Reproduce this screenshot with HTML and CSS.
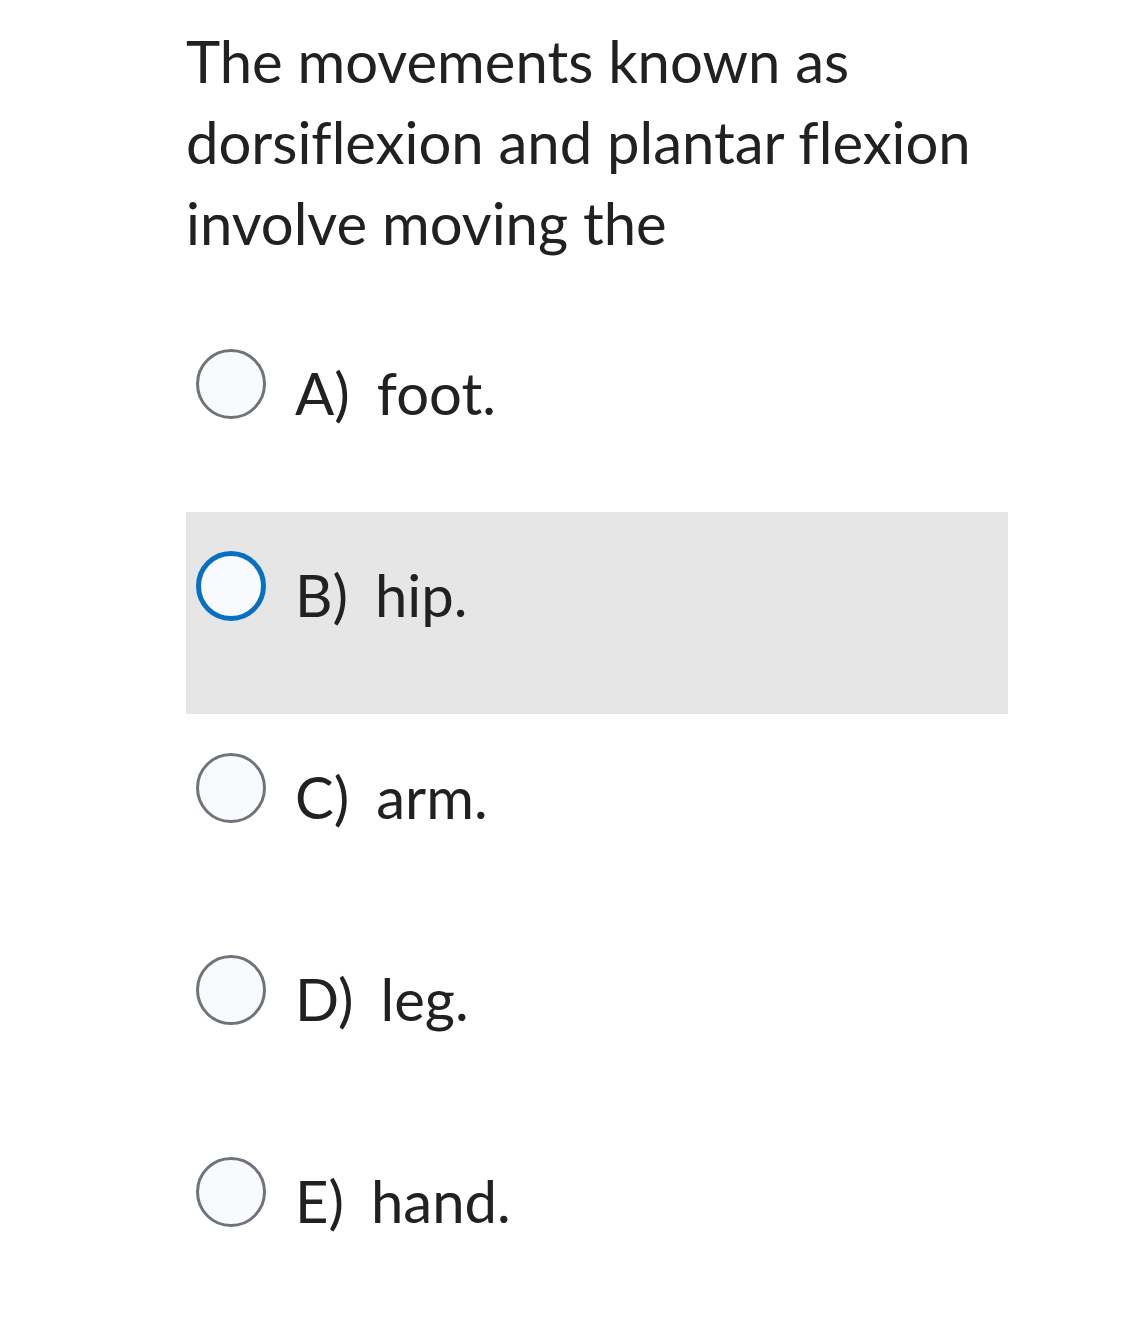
FILE: index.html
```html
<!DOCTYPE html>
<html>
<head>
<meta charset="utf-8">
<link rel="stylesheet" href="styles.css">
</head>
<body>
<div class="quiz">
  <p class="question">The movements known as dorsiflexion and plantar flexion involve moving the</p>
  <div class="options">
    <label class="option"><span class="radio"></span><span class="label"><span class="letter">A)</span>foot.</span></label>
    <label class="option focused"><span class="radio"></span><span class="label"><span class="letter">B)</span>hip.</span></label>
    <label class="option"><span class="radio"></span><span class="label"><span class="letter">C)</span>arm.</span></label>
    <label class="option"><span class="radio"></span><span class="label"><span class="letter">D)</span>leg.</span></label>
    <label class="option"><span class="radio"></span><span class="label"><span class="letter">E)</span>hand.</span></label>
  </div>
</div>
</body>
</html>
```
FILE: styles.css
```css
html, body {
  margin: 0;
  padding: 0;
  background: #ffffff;
}
body {
  font-family: Lato, "Noto Sans", sans-serif;
  color: #202122;
  font-variant-ligatures: none;
}
.quiz {
  margin-left: 186px;
  width: 822px;
}
.question {
  margin: 0;
  padding-top: 20px;
  font-size: 58px;
  line-height: 81px;
  width: 822px;
}
.options {
  margin-top: 47px;
  display: flex;
  flex-direction: column;
}
.option {
  display: flex;
  align-items: flex-start;
  height: 202px;
  box-sizing: border-box;
  padding-top: 39px;
  padding-left: 10px;
}
.option.focused {
  background: #e6e6e6;
}
.radio {
  width: 70px;
  height: 70px;
  box-sizing: border-box;
  border-radius: 50%;
  border: 3px solid #6f7478;
  background: #f9fafe;
  flex: none;
}
.focused .radio {
  border: 5px solid #0770c2;
}
.label {
  margin-left: 29px;
  margin-top: 12px;
  font-size: 58px;
  line-height: 64px;
}
.letter {
  margin-right: 27px;
}
```
